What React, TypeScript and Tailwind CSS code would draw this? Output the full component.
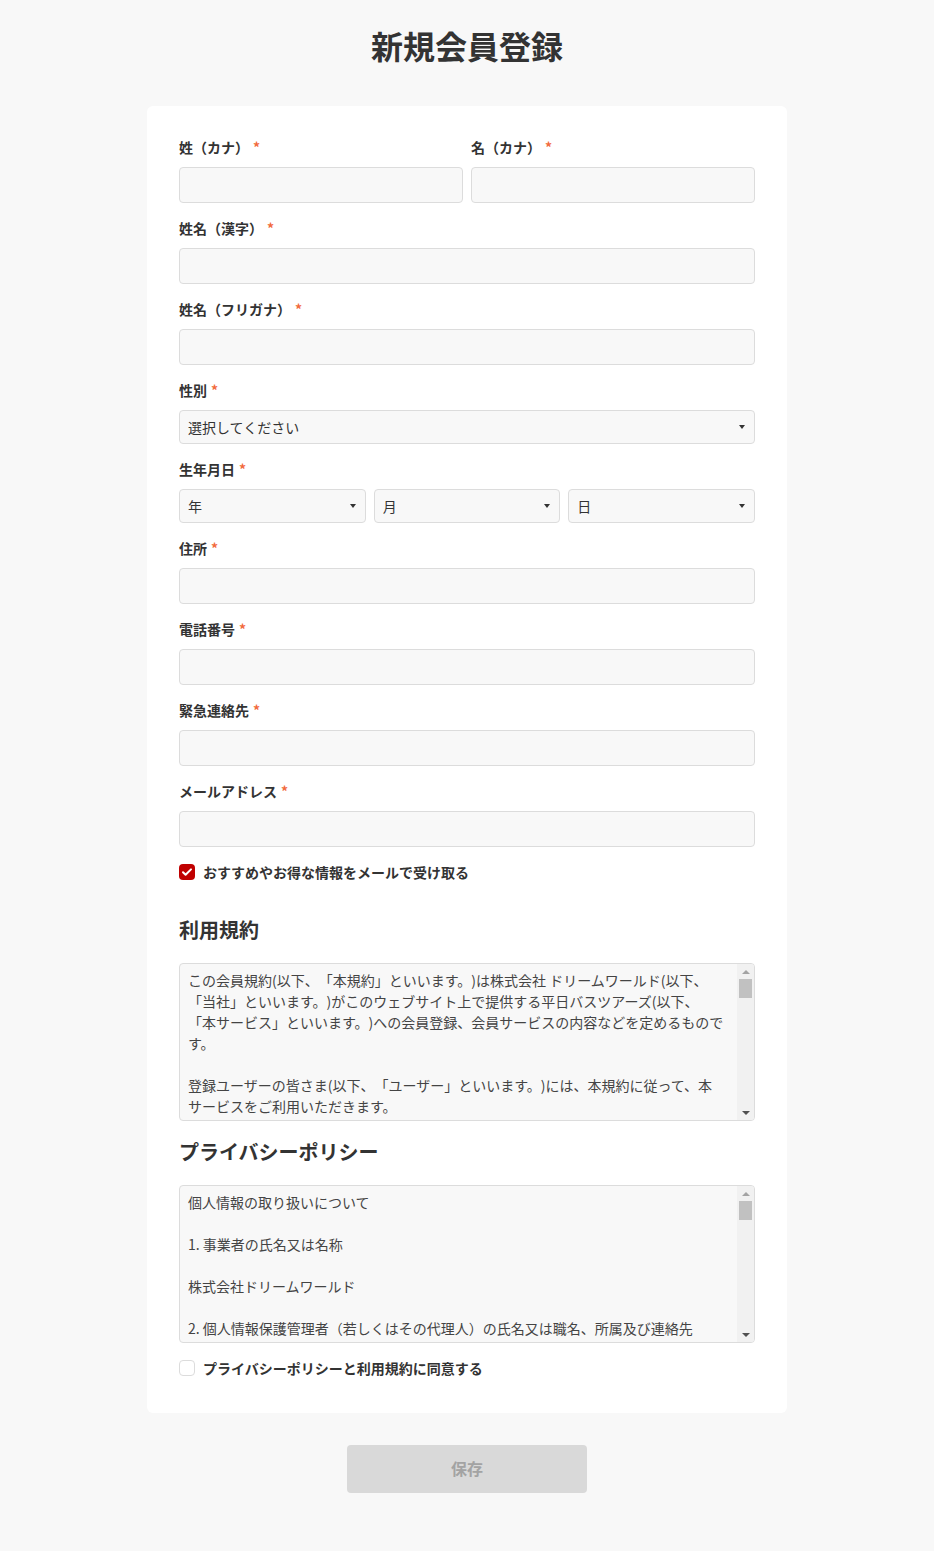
import { useState } from "react";

const TERMS_TEXT = `この会員規約(以下、「本規約」といいます。)は株式会社 ドリームワールド(以下、「当社」といいます。)がこのウェブサイト上で提供する平日バスツアーズ(以下、「本サービス」といいます。)への会員登録、会員サービスの内容などを定めるものです。

登録ユーザーの皆さま(以下、「ユーザー」といいます。)には、本規約に従って、本サービスをご利用いただきます。

第1条（適用）
本規約は、ユーザーと当社との間の本サービスの利用に関わる一切の関係に適用されるものとします。

第2条（利用登録）
登録希望者が当社の定める方法によって利用登録を申請し、当社がこれを承認することによって、利用登録が完了するものとします。

第3条（ユーザーIDおよびパスワードの管理）
ユーザーは、自己の責任において、本サービスのユーザーIDおよびパスワードを適切に管理するものとします。

第4条（禁止事項）
ユーザーは、本サービスの利用にあたり、法令または公序良俗に違反する行為、その他当社が不適切と判断する行為をしてはなりません。

以上`;

const PRIVACY_TEXT = `個人情報の取り扱いについて

1. 事業者の氏名又は名称

株式会社ドリームワールド

2. 個人情報保護管理者（若しくはその代理人）の氏名又は職名、所属及び連絡先

管理者名：個人情報保護管理者
所属部署：管理部

3. 個人情報の利用目的

ご入力いただいた個人情報は、会員登録、ツアーのご予約・お申込みの受付、ご案内の送付、お問い合わせへの対応のために利用いたします。

4. 個人情報の第三者提供について

当社は、ご本人の同意がある場合又は法令に基づく場合を除き、取得した個人情報を第三者に提供することはありません。

以上`;

function Required() {
    return <span className="ml-1 text-[#f26a3d]">*</span>;
}

function Label({ children }: { children: React.ReactNode }) {
    return (
        <div className="mb-[10px] text-sm font-bold leading-5 text-[#333]">
            {children}
            <Required />
        </div>
    );
}

function TextInput() {
    return (
        <input
            type="text"
            className="block h-9 w-full rounded border border-[#dcdcdc] bg-[#f8f8f8] px-2 text-sm text-[#333] outline-none"
        />
    );
}

function Select({ placeholder }: { placeholder: string }) {
    return (
        <div className="relative">
            <select
                defaultValue=""
                className="block h-[34px] w-full appearance-none rounded border border-[#dcdcdc] bg-[#f8f8f8] pl-2 pr-6 text-sm text-[#333] outline-none"
            >
                <option value="">{placeholder}</option>
            </select>
            <span className="pointer-events-none absolute right-[10px] top-1/2 -mt-[2px] h-0 w-0 border-x-[3px] border-t-[4px] border-x-transparent border-t-[#333]" />
        </div>
    );
}

function Checkbox({ checked, onChange, label }: { checked: boolean; onChange: () => void; label: string }) {
    return (
        <div
            role="checkbox"
            aria-checked={checked}
            onClick={onChange}
            className="flex cursor-pointer items-center gap-2 text-sm font-bold leading-5 text-[#333]"
        >
            <span
                className={
                    checked
                        ? "flex h-4 w-4 items-center justify-center rounded-sm bg-[#c00000]"
                        : "flex h-4 w-4 items-center justify-center rounded-sm border border-[#dcdcdc] bg-white"
                }
            >
                {checked && (
                    <svg viewBox="0 0 16 16" className="h-4 w-4" fill="none">
                        <path d="M4 8.2l2.6 2.6L12 5.4" stroke="#fff" strokeWidth="2" strokeLinecap="round" strokeLinejoin="round" />
                    </svg>
                )}
            </span>
            <span>{label}</span>
        </div>
    );
}

// scroll box with a classic scrollbar drawn beside the text
function ScrollBox({ text }: { text: string }) {
    return (
        <div className="mt-[18px] flex h-[158px] w-full overflow-hidden rounded border border-[#dcdcdc] bg-[#f8f8f8]">
            <div className="flex-1 overflow-hidden whitespace-pre-wrap pl-2 pr-3 pt-[6px] text-sm leading-[21px] text-[#444]">
                {text}
            </div>
            <div className="flex w-[17px] flex-col bg-[#f1f1f1]">
                <div className="flex h-[15px] items-center justify-center">
                    <span className="h-0 w-0 border-x-[4px] border-b-[4px] border-x-transparent border-b-[#a3a3a3]" />
                </div>
                <div className="mx-[2px] h-[19px] bg-[#c1c1c1]" />
                <div className="flex-1" />
                <div className="flex h-[15px] items-center justify-center">
                    <span className="h-0 w-0 border-x-[4px] border-t-[4px] border-x-transparent border-t-[#505050]" />
                </div>
            </div>
        </div>
    );
}

export default function App() {
    const [newsletter, setNewsletter] = useState(true);
    const [agree, setAgree] = useState(false);

    return (
        <div className="min-h-screen bg-[#f8f8f8] pb-[58px] pt-[22px] font-['Noto_Sans_CJK_JP',sans-serif] text-[#333] [text-spacing-trim:space-all]">
            <h1 className="text-center text-[32px] font-bold leading-[46px] text-[#333]">新規会員登録</h1>

            <div className="mx-auto mt-[38px] w-[640px] rounded-md bg-white px-8 pb-[35px] pt-[31px]">
                <div className="grid grid-cols-2 gap-2">
                    <div>
                        <Label>姓（カナ）</Label>
                        <TextInput />
                    </div>
                    <div>
                        <Label>名（カナ）</Label>
                        <TextInput />
                    </div>
                </div>

                <div className="mt-[15px]">
                    <Label>姓名（漢字）</Label>
                    <TextInput />
                </div>

                <div className="mt-[15px]">
                    <Label>姓名（フリガナ）</Label>
                    <TextInput />
                </div>

                <div className="mt-[15px]">
                    <Label>性別</Label>
                    <Select placeholder="選択してください" />
                </div>

                <div className="mt-[15px]">
                    <Label>生年月日</Label>
                    <div className="grid grid-cols-3 gap-2">
                        <Select placeholder="年" />
                        <Select placeholder="月" />
                        <Select placeholder="日" />
                    </div>
                </div>

                <div className="mt-[15px]">
                    <Label>住所</Label>
                    <TextInput />
                </div>

                <div className="mt-[15px]">
                    <Label>電話番号</Label>
                    <TextInput />
                </div>

                <div className="mt-[15px]">
                    <Label>緊急連絡先</Label>
                    <TextInput />
                </div>

                <div className="mt-[15px]">
                    <Label>メールアドレス</Label>
                    <TextInput />
                </div>

                <div className="mt-[15px]">
                    <Checkbox
                        checked={newsletter}
                        onChange={() => setNewsletter(v => !v)}
                        label="おすすめやお得な情報をメールで受け取る"
                    />
                </div>

                <h2 className="mt-[33px] text-[20px] font-bold leading-[30px] text-[#333]">利用規約</h2>
                <ScrollBox text={TERMS_TEXT} />

                <h2 className="mt-4 text-[20px] font-bold leading-[30px] text-[#333]">プライバシーポリシー</h2>
                <ScrollBox text={PRIVACY_TEXT} />

                <div className="mt-[15px]">
                    <Checkbox
                        checked={agree}
                        onChange={() => setAgree(v => !v)}
                        label="プライバシーポリシーと利用規約に同意する"
                    />
                </div>
            </div>

            <div className="mt-8 flex justify-center">
                <button
                    disabled={!agree}
                    className="h-12 w-60 rounded bg-[#d9d9d9] pb-[3px] text-base font-bold text-[#a3a3a3]"
                >
                    保存
                </button>
            </div>
        </div>
    );
}
